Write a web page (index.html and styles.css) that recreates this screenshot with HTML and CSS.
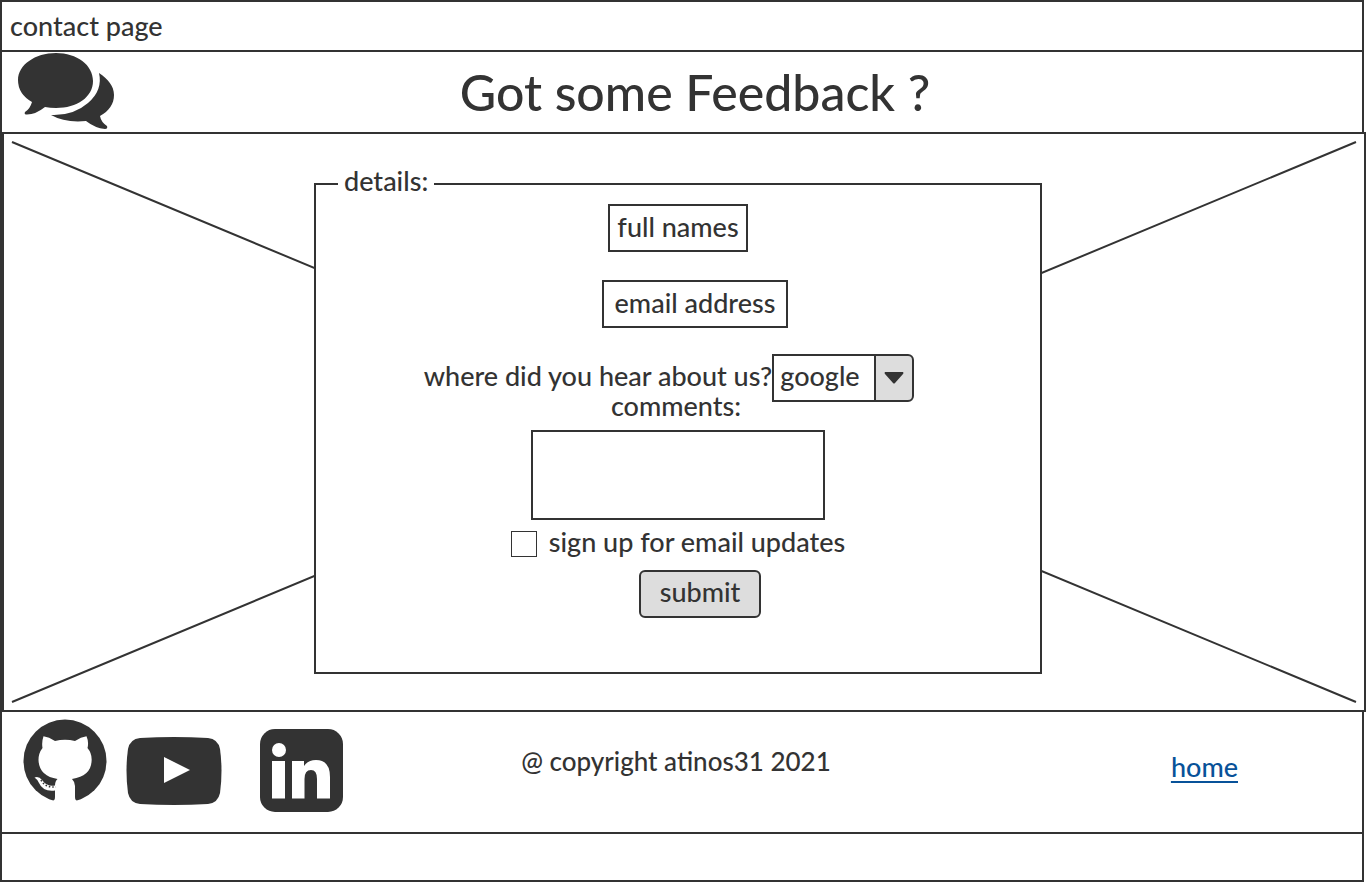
FILE: index.html
```html
<!DOCTYPE html>
<html lang="en">
<head>
<meta charset="utf-8">
<meta name="viewport" content="width=device-width, initial-scale=1">
<title>contact page</title>
<link rel="stylesheet" href="styles.css">
</head>
<body>
<div class="page">
  <div class="titlebar">contact page</div>
  <header class="header">
    <svg class="logo" viewBox="0 0 98 78" aria-hidden="true">
      <path d="M39 1C60 1 76 13 76 29C76 45 60 56 39 56Q33 56 28 55Q18 63 9 62.500Q7 62 8 60Q13 57 15 50Q1 42 1 28C1 13 18 1 39 1Z"/>
      <path d="M82 21C91 27 97 34 97 43C97 52 92 59 83 64Q84 70 90 74Q91 77 88 77Q78 76 69 69Q48 71 34 63Q56 64 71 51Q86 38 82 21Z"/>
    </svg>
    <h1 class="heading">Got some Feedback ?</h1>
  </header>
  <main class="hero">
    <svg class="cross" viewBox="0 0 100 100" preserveAspectRatio="none" aria-hidden="true">
      <path d="M0 0L100 100M100 0L0 100"/>
    </svg>
    <form class="form">
      <fieldset class="details">
        <legend class="legend">details:</legend>
        <div class="fields">
          <input class="box name" type="text" aria-label="full names" placeholder="full names">
          <input class="box email" type="text" aria-label="email address" placeholder="email address">
          <div class="source">
            <label class="source-label" for="source">where did you hear about us?</label>
            <div class="picker">
              <select class="select" id="source"><option>google</option></select>
              <svg class="arrow" viewBox="0 0 20 12" aria-hidden="true"><path d="M1 0H19Q20 1 19 2L11 11Q10 12 9 11L1 2Q0 1 1 0Z"/></svg>
            </div>
          </div>
          <label class="comments-label" for="comments">comments:</label>
          <textarea class="box comments" id="comments"></textarea>
          <div class="signup">
            <input class="check" type="checkbox" id="updates">
            <label class="signup-label" for="updates">sign up for email updates</label>
          </div>
          <button class="submit" type="button">submit</button>
        </div>
      </fieldset>
    </form>
  </main>
  <footer class="footer">
    <div class="social">
      <svg class="github" viewBox="0 0 84 84" aria-hidden="true">
        <circle cx="42" cy="42" r="41.500"/>
        <path class="cut" d="M20.500 17.300Q26 18 32 22Q42 19.500 52 22Q58 18 63.500 17.300Q66 23 64.500 29Q69.500 35 68.500 43Q67.500 57 49 60Q52 63 52 67V78Q52 82 55 82V84H29V82Q32 82 32 78V71.500Q20 73 16 64Q14 60 11.500 58.500Q16 57 19 61Q24 68 32 66.500Q32 62 34.500 60Q16 57 15.500 41Q15.500 34 19.500 29Q18.500 23 20.500 17.300Z"/>
        <path class="dots" d="M18 61Q22 69 33 68"/>
      </svg>
      <svg class="youtube" viewBox="0 0 96 68" aria-hidden="true">
        <path d="M14 1Q48-1 82 1Q92 2 94 12Q97 34 94 56Q92 66 82 67Q48 69 14 67Q4 66 2 56Q-1 34 2 12Q4 2 14 1Z"/>
        <path class="cut" d="M38 20L64 33L38 46Z"/>
      </svg>
      <svg class="linkedin" viewBox="0 0 83 83" aria-hidden="true">
        <rect width="83" height="83" rx="15"/>
        <circle class="cut" cx="19" cy="21" r="7"/>
        <path class="cut" d="M12 32H25V69.500H12ZM32 32H44V37Q48 31 56 31Q70 31 70 48V69.500H57V50Q57 41 51 41Q44.500 41 44.500 50V69.500H32Z"/>
      </svg>
    </div>
    <p class="copyright">@ copyright atinos31 2021</p>
    <a class="home" href="#">home</a>
  </footer>
  <div class="strip"></div>
</div>
</body>
</html>
```
FILE: styles.css
```css
* { box-sizing: border-box; }
body { margin: 0; background: #fff; color: #333; font: 500 27px/32px "Lato Medium", Lato, "Open Sans", sans-serif; }
input, select, textarea, button { font: inherit; color: inherit; margin: 0; }
svg { fill: #333; display: block; flex: none; }
.cut { fill: #fff; }
.dots { fill: none; stroke: #333; stroke-width: 1.500px; stroke-dasharray: 1.500 2; }
.page { min-height: 100vh; display: flex; flex-direction: column; border-left: 2px solid #333; }
.titlebar, .header, .footer, .strip { margin-right: 2px; border-right: 2px solid #333; border-bottom: 2px solid #333; }
.titlebar { border-top: 2px solid #333; padding: 8px; }
.header { display: grid; grid-template-columns: 112px 1fr 86px; align-items: start; height: 82px; }
.logo { width: 98px; height: 78px; margin-left: 15px; }
.heading { margin: 0; font-size: 50px; line-height: 80px; font-weight: 500; text-align: center; }
.hero { position: relative; margin-top: -2px; border: 2px solid #333; padding: 31px 12px 36px 0; }
.cross { position: absolute; inset: 8px; width: calc(100% - 16px); height: calc(100% - 16px); overflow: visible; }
.cross path { stroke: #333; stroke-width: 2px; vector-effect: non-scaling-stroke; }
.form { position: relative; max-width: 728px; margin: 0 auto; }
.details { margin: 0; border: 2px solid #333; padding: 1px 0 54px; background: #fff; }
.legend { margin-left: 22px; padding: 0 6px 6px; background: #fff; }
.fields { display: flex; flex-direction: column; align-items: center; }
.box { border: 2px solid #333; border-radius: 0; background: #fff; padding: 0 4px 4px; text-align: center; }
.box::placeholder { color: #333; opacity: 1; }
.name, .email { height: 48px; }
.name { width: 140px; }
.email { width: 186px; margin: 28px 0 26px 34px; }
.source { display: flex; align-items: center; margin-right: 18px; }
.source-label, .signup-label { padding-bottom: 4px; }
.picker { position: relative; }
.select { display: block; width: 142px; height: 48px; appearance: none; border: 2px solid #333; border-radius: 0 6px 6px 0; padding: 0 44px 4px 6px; background: linear-gradient(#333, #333) right 36px top / 2px 100% no-repeat, linear-gradient(#ddd, #ddd) right / 36px 100% no-repeat #fff; }
.arrow { position: absolute; right: 10px; top: 18px; width: 20px; height: 12px; pointer-events: none; }
.comments-label { margin: -12px 4px 8px 0; }
.comments { width: 294px; height: 90px; resize: none; }
.signup { display: flex; align-items: center; gap: 12px; margin: 6px 0 8px; }
.check { appearance: none; width: 26px; height: 26px; border: 1px solid #333; background: #fff; }
.submit { width: 122px; height: 48px; margin-left: 44px; border: 2px solid #333; border-radius: 6px; background: #ddd; padding: 0 0 4px; }
.footer { flex: 1; display: grid; grid-template-columns: 1fr auto 1fr; align-items: start; padding: 7px 0; }
.social { display: flex; padding-left: 21px; }
.github { width: 84px; height: 84px; }
.youtube { width: 96px; height: 68px; margin: 18px 38px 0 19px; }
.linkedin { width: 83px; height: 83px; margin-top: 10px; }
.copyright { margin: 26px 12px 0 0; font-size: 26px; }
.home { justify-self: end; margin: 32px 124px 0 0; color: #085299; text-underline-offset: 4px; text-decoration-thickness: 2px; }
.strip { height: 48px; }
```
